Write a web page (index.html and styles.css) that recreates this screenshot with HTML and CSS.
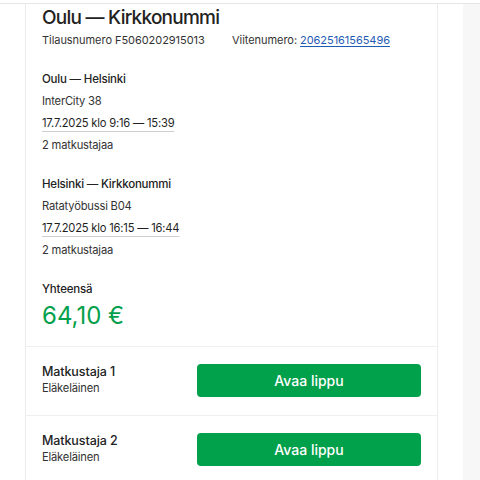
FILE: index.html
```html
<!DOCTYPE html>
<html lang="fi">
<head>
<meta charset="utf-8">
<link rel="stylesheet" href="styles.css">
</head>
<body>
<div class="page">
  <div class="topbar"></div>
  <div class="layout">
    <main class="card">
      <section class="head">
        <h1 class="title">Oulu — Kirkkonummi</h1>
        <div class="meta">
          <span class="order">Tilausnumero F5060202915013</span>
          <span class="ref">Viitenumero: <a href="#" class="link">20625161565496</a></span>
        </div>
      </section>
      <section class="leg">
        <div class="leg-title">Oulu — Helsinki</div>
        <div class="line">InterCity 38</div>
        <div class="line"><span class="date">17.7.2025 klo 9:16 — 15:39</span></div>
        <div class="line">2 matkustajaa</div>
      </section>
      <section class="leg">
        <div class="leg-title">Helsinki — Kirkkonummi</div>
        <div class="line">Ratatyöbussi B04</div>
        <div class="line"><span class="date">17.7.2025 klo 16:15 — 16:44</span></div>
        <div class="line">2 matkustajaa</div>
      </section>
      <section class="total">
        <div class="leg-title">Yhteensä</div>
        <div class="price">64,10 €</div>
      </section>
      <div class="passenger">
        <div class="p-info">
          <div class="p-name">Matkustaja 1</div>
          <div class="p-type">Eläkeläinen</div>
        </div>
        <button class="btn">Avaa lippu</button>
      </div>
      <div class="passenger">
        <div class="p-info">
          <div class="p-name">Matkustaja 2</div>
          <div class="p-type">Eläkeläinen</div>
        </div>
        <button class="btn">Avaa lippu</button>
      </div>
    </main>
    <div class="gutter"></div>
    <div class="scroll"></div>
  </div>
</div>
</body>
</html>
```
FILE: styles.css
```css
html, body {
  margin: 0;
  padding: 0;
  background: #ffffff;
  font-family: Inter, "Noto Sans", "Liberation Sans", sans-serif;
  color: #2b2b2b;
}
.page {
  height: 480px;
  overflow: hidden;
}
.topbar {
  height: 3px;
  border-bottom: 1px solid #e6e6e6;
}
.layout {
  display: flex;
  height: 476px;
}
.card {
  margin-left: 25px;
  width: 411px;
  flex: none;
  border-left: 1px solid #ececec;
  border-right: 1px solid #ececec;
  display: flex;
  flex-direction: column;
}
.gutter {
  width: 25px;
  flex: none;
}
.scroll {
  flex: 1;
  background: #f7f7f7;
}
.head {
  padding: 1px 17px 0 16px;
}
.title {
  margin: 0;
  font-size: 19px;
  font-weight: 500;
  line-height: 26px;
  color: #222;
  letter-spacing: -0.75px;
}
.meta {
  display: grid;
  grid-template-columns: 190px auto;
  font-size: 11px;
  line-height: 18px;
  color: #333;
  white-space: nowrap;
  letter-spacing: -0.05px;
}
.link {
  color: #1f5bb5;
  text-decoration: underline;
  text-underline-offset: 2px;
}
.leg {
  padding: 17px 17px 0 16px;
}
.head + .leg {
  padding-top: 19px;
}
.leg-title {
  font-size: 11.5px;
  font-weight: 500;
  line-height: 22px;
  color: #222;
  letter-spacing: -0.2px;
}
.line {
  font-size: 11.2px;
  line-height: 22px;
  color: #333;
  letter-spacing: -0.2px;
}
.date {
  color: #1f1f1f;
  text-decoration: underline;
  text-decoration-color: #cfcfcf;
  text-underline-offset: 4px;
}
.total {
  padding: 17px 17px 14px 16px;
}
.price {
  font-size: 24px;
  line-height: 32px;
  color: #03a04c;
}
.passenger {
  display: flex;
  align-items: center;
  justify-content: space-between;
  border-top: 1px solid #f0f0f0;
  padding: 16px 16px 18px 16px;
}
.p-name {
  font-size: 12.5px;
  font-weight: 500;
  line-height: 17px;
  color: #222;
  letter-spacing: -0.1px;
}
.p-type {
  font-size: 11.2px;
  line-height: 17px;
  color: #333;
  letter-spacing: -0.2px;
}
.btn {
  width: 224px;
  height: 33px;
  border: none;
  border-radius: 4px;
  background: #01a04b;
  color: #ffffff;
  font-family: inherit;
  font-size: 14px;
  font-weight: 500;
}
```
